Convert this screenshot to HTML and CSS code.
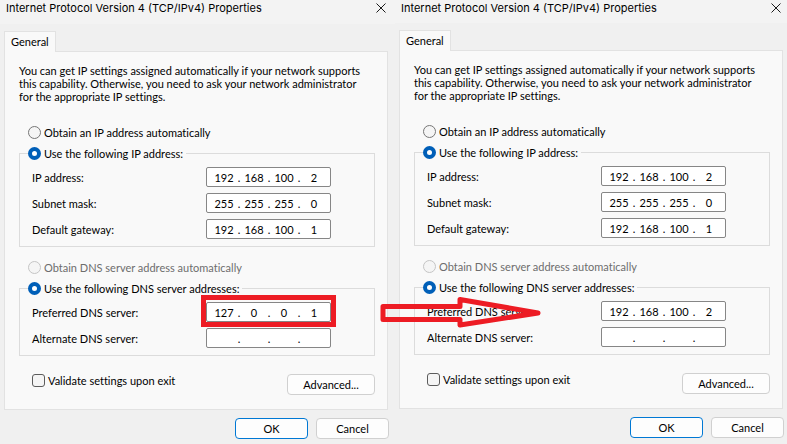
FILE: index.html
```html
<!DOCTYPE html>
<html lang="en">
<head>
<meta charset="utf-8">
<title>Internet Protocol Version 4 (TCP/IPv4) Properties</title>
<link rel="stylesheet" href="styles.css">
</head>
<body>
<main class="compare" id="compare"></main>
<template id="dialog-template">
  <section class="dialog">
    <header class="titlebar">
      <h1 class="title">Internet Protocol Version 4 (TCP/IPv4) Properties</h1>
      <button class="close" type="button" aria-label="Close">
        <svg viewBox="0 0 10 10" width="10" height="10"><path d="M0.5 0.5L9.5 9.5M9.5 0.5L0.5 9.5"/></svg>
      </button>
    </header>
    <form class="body">
      <button class="tab" type="button">General</button>
      <div class="panel">
        <p class="intro">You can get IP settings assigned automatically if your network supports<br>this capability. Otherwise, you need to ask your network administrator<br>for the appropriate IP settings.</p>
        <label class="option"><input type="radio" name="ip">Obtain an IP address automatically</label>
        <fieldset class="group">
          <legend><label class="option"><input type="radio" name="ip" checked>Use the following IP address:</label></legend>
          <div class="rows" data-rows="ip"></div>
        </fieldset>
        <label class="option disabled"><input type="radio" name="dns" disabled>Obtain DNS server address automatically</label>
        <fieldset class="group">
          <legend><label class="option"><input type="radio" name="dns" checked>Use the following DNS server addresses:</label></legend>
          <div class="rows" data-rows="dns"></div>
        </fieldset>
        <div class="extras">
          <label class="option validate"><input type="checkbox">Validate settings upon exit</label>
          <button class="button advanced" type="button">Advanced...</button>
        </div>
      </div>
      <div class="actions">
        <button class="button default" type="button">OK</button>
        <button class="button" type="button">Cancel</button>
      </div>
    </form>
  </section>
</template>
<template id="arrow-template">
  <svg class="arrow" viewBox="0 0 164 34" width="164" height="34" aria-hidden="true"><path d="M4 11.500H81V4.500L159 18L81 30V24.500H4Z"/></svg>
</template>
<script src="dialogs.js"></script>
</body>
</html>
```
FILE: styles.css
```css
* {
  box-sizing: border-box;
}

body {
  margin: 0;
  background: #f0f0f0;
  color: #000;
  font: 11px/13px Lato, sans-serif;
  font-variant-ligatures: none;
}

button,
input {
  font: inherit;
  color: inherit;
}

.compare {
  display: grid;
  grid-template-columns: 395fr 392fr;
  min-height: 100vh;
  overflow: hidden;
}

.dialog {
  position: relative;
  min-width: 0;
}

.titlebar {
  display: flex;
  align-items: center;
  justify-content: space-between;
  height: 24px;
  padding: 0 9px 8px 6px;
  background: #f3f3f3;
}

.dialog.after .titlebar {
  height: 23px;
}

.title {
  margin: 0;
  font: 11px/16px Inter, sans-serif;
  white-space: nowrap;
}

.close {
  display: flex;
  padding: 0;
  border: 0;
  background: none;
}

.close path {
  fill: none;
  stroke: #1a1a1a;
}

.body {
  padding: 7px 7px 0 4px;
}

.dialog.after .body {
  padding-right: 4px;
}

.dialog.after .titlebar {
  padding-right: 6px;
}

.tab {
  position: relative;
  display: block;
  height: 21px;
  margin-bottom: -1px;
  padding: 0 6px 2px;
  border: 1px solid #e2e2e2;
  border-bottom: 0;
  background: #f9f9f9;
}

.panel {
  padding: 12px 12px 14px 14px;
  border: 1px solid #e2e2e2;
  background: #f9f9f9;
}

.intro {
  margin: 0 0 23px;
  white-space: nowrap;
}

.option {
  display: flex;
  align-items: center;
  gap: 3px;
  height: 13px;
  margin-left: 9px;
  white-space: nowrap;
}

.option input {
  flex: none;
  appearance: none;
  width: 13px;
  height: 13px;
  margin: 0;
  border: 1px solid #767676;
  border-radius: 50%;
  background: #f5f5f5;
}

.option input:checked {
  border: 4px solid #005fb8;
  background: #fff;
}

.option input[type="checkbox"] {
  border-color: #5c5c5c;
  border-radius: 3px;
}

.option.disabled {
  color: #6d6d6d;
}

.option.disabled input {
  border-color: #c5c5c5;
}

.group {
  min-width: 0;
  margin: 8px 0 14px;
  padding: 0 0 7px;
  border: 1px solid #dcdcdc;
}

.group legend {
  margin-left: 8px;
  padding: 0 3px 0 0;
}

.group .option {
  margin-left: 0;
}

.rows {
  display: grid;
  gap: 6px;
  padding: 7px 43px 0 12px;
}

.row {
  display: flex;
  align-items: center;
  justify-content: space-between;
}

.address {
  position: relative;
  display: flex;
  align-items: center;
  height: 20px;
  padding: 0 3px 0 4px;
  border: 1px solid #868686;
  border-radius: 2px;
  background: #fff;
}

.address input {
  width: 26px;
  height: 18px;
  padding: 0;
  border: 0;
  background: none;
  text-align: center;
}

.address span {
  width: 4px;
  text-align: center;
}

.address.marked::after {
  content: "";
  position: absolute;
  inset: -8px -6px -6px;
  border: 5px solid #ed1c24;
}

.extras {
  display: flex;
  align-items: center;
  justify-content: space-between;
  padding-top: 4px;
}

.validate {
  margin-bottom: 8px;
  margin-left: 13px;
}

.button {
  min-width: 73px;
  height: 21px;
  padding: 0;
  border: 1px solid #d0d0d0;
  border-radius: 4px;
  background: #fdfdfd;
}

.button.default {
  border-color: #0078d4;
}

.button.advanced {
  min-width: 88px;
}

.actions {
  display: flex;
  justify-content: flex-end;
  gap: 8px;
  margin-right: -1px;
  padding-top: 8px;
}

.arrow {
  position: absolute;
  top: 295px;
  left: -16px;
}

.arrow path {
  fill: none;
  stroke: #ed1c24;
  stroke-width: 5;
  stroke-linejoin: round;
}
```
FILE: dialogs.js
```js
const dialogs = [
  {
    id: "before",
    ip: [["IP address:", "192.168.100.2"], ["Subnet mask:", "255.255.255.0"], ["Default gateway:", "192.168.100.1"]],
    dns: [["Preferred DNS server:", "127.0.0.1", true], ["Alternate DNS server:", "..."]]
  },
  {
    id: "after",
    ip: [["IP address:", "192.168.100.2"], ["Subnet mask:", "255.255.255.0"], ["Default gateway:", "192.168.100.1"]],
    dns: [["Preferred DNS server:", "192.168.100.2"], ["Alternate DNS server:", "..."]]
  }
];

function addressRow(id, label, value, marked) {
  const octets = value.split(".").map((part, i) =>
    `<input type="text" ${i ? "" : `id="${id}"`} aria-label="${label} octet ${i + 1}" maxlength="3" value="${part}">`);
  return `<div class="row"><label for="${id}">${label}</label>
    <div class="address${marked ? " marked" : ""}">${octets.join("<span>.</span>")}</div></div>`;
}

const root = document.getElementById("compare");
for (const data of dialogs) {
  const node = document.getElementById("dialog-template").content.cloneNode(true);
  node.querySelector(".dialog").classList.add(data.id);
  for (const group of ["ip", "dns"]) {
    node.querySelector(`[data-rows="${group}"]`).innerHTML = data[group]
      .map(([label, value, marked], i) => addressRow(`${data.id}-${group}-${i}`, label, value, marked))
      .join("");
  }
  root.append(node);
}
root.querySelector(".after").append(document.getElementById("arrow-template").content.cloneNode(true));
```
